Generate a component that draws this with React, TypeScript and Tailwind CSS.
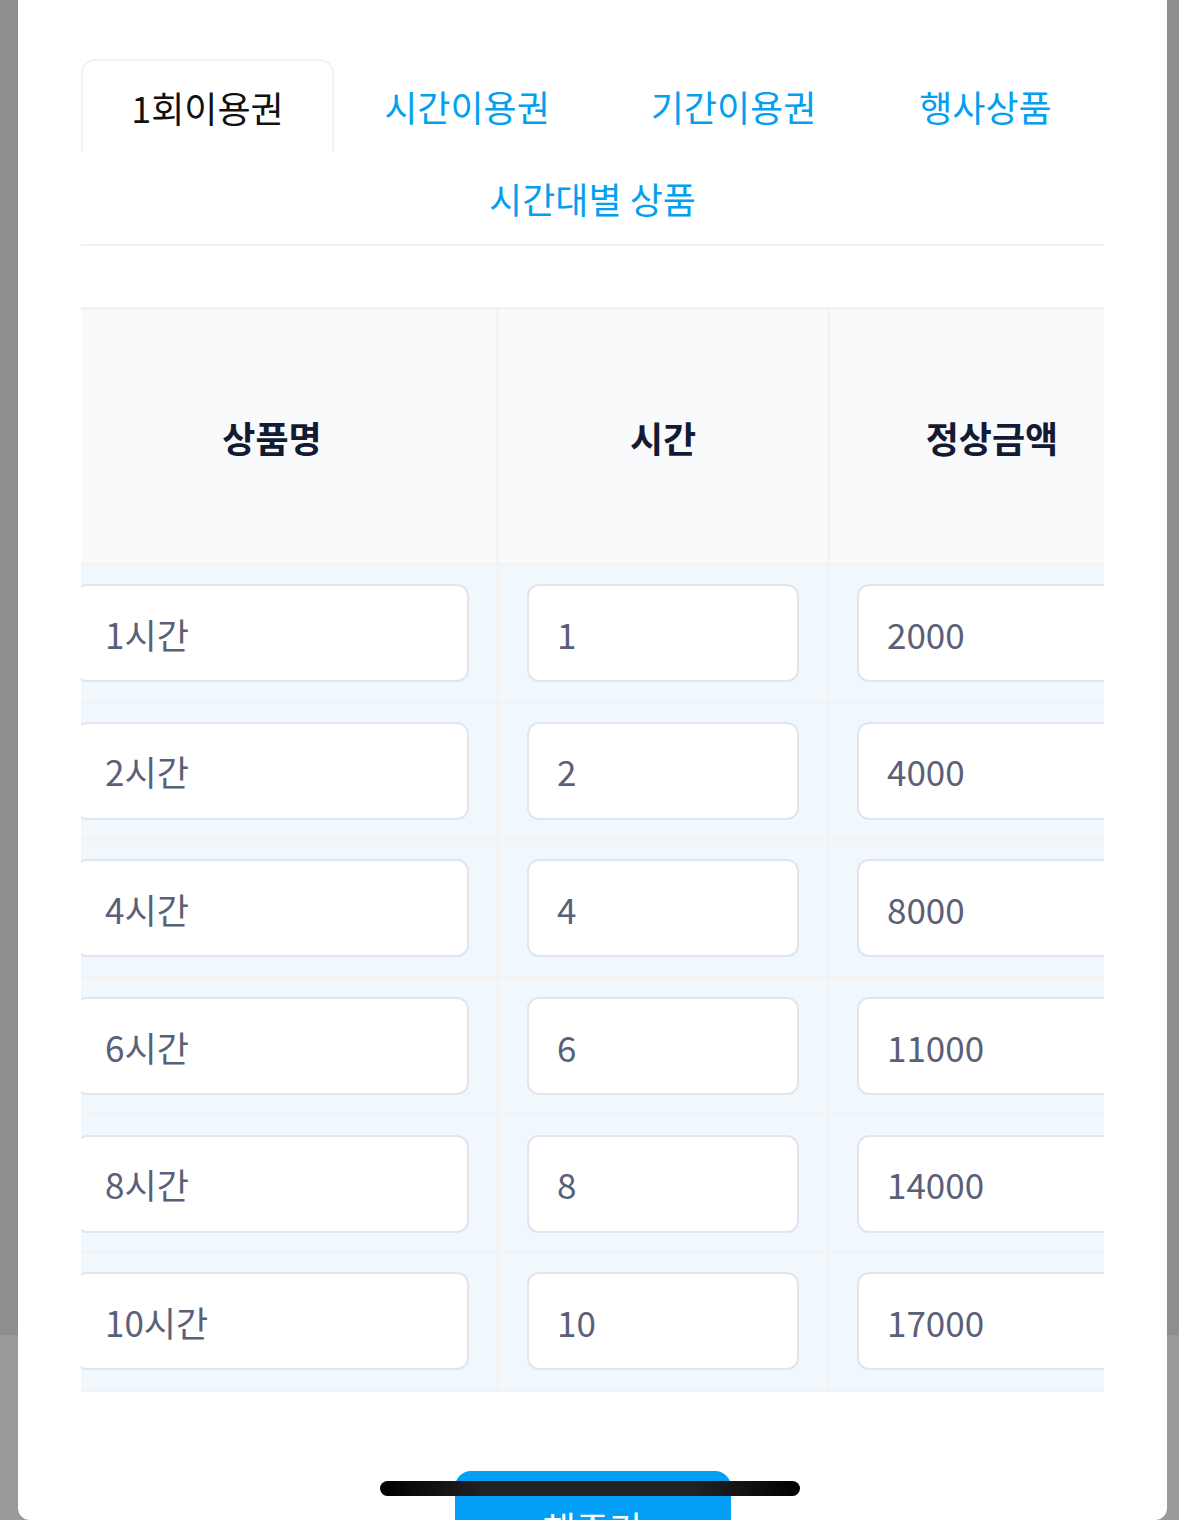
import React from 'react';

const TABS = [
  { label: '1회이용권', width: 'w-[253px]', active: true },
  { label: '시간이용권', width: 'w-[266px]', active: false },
  { label: '기간이용권', width: 'w-[267px]', active: false },
  { label: '행사상품', width: 'w-[237px]', active: false },
];

const ROWS = [
  { name: '1시간', hours: '1', price: '2000' },
  { name: '2시간', hours: '2', price: '4000' },
  { name: '4시간', hours: '4', price: '8000' },
  { name: '6시간', hours: '6', price: '11000' },
  { name: '8시간', hours: '8', price: '14000' },
  { name: '10시간', hours: '10', price: '17000' },
];

const Field = ({ value }: { value: string }) => (
  <input
    readOnly
    defaultValue={value}
    className="h-[98px] w-full rounded-[12px] border-2 border-[#e1e5ee] bg-white pl-[28px] text-[35px] text-[#5b6079] outline-none"
  />
);

export default function App() {
  return (
    <div className="relative h-[1520px] w-[1179px] overflow-hidden bg-[linear-gradient(to_bottom,#8e8e90_1335px,#999999_1335px)] font-['Noto_Sans_CJK_KR','Noto_Sans',sans-serif]">
      <div className="ml-[18px] mr-[12px] h-full rounded-b-[12px] bg-white px-[63px] pt-[59px]">
        {/* 탭 */}
        <div className="flex flex-wrap justify-center border-b-2 border-[#f2f2f2]">
          {TABS.map((tab) => (
            <div
              key={tab.label}
              className={`flex h-[93px] items-center justify-center text-[36px] ${tab.width} ${
                tab.active
                  ? 'rounded-t-[14px] border-x-2 border-t-2 border-[#f2f2f2] text-[#111111]'
                  : 'text-[#03a0f0]'
              }`}
            >
              {tab.label}
            </div>
          ))}
          <div className="flex h-[92px] items-center justify-center px-[52px] text-[36px] text-[#03a0f0]">
            시간대별 상품
          </div>
        </div>

        {/* 표 */}
        <div className="mt-[61px] w-full overflow-hidden">
          <div className="ml-[-33px] w-[1140px] border-y-[3px] border-[#f3f3f3]">
            <div className="flex h-[253px] bg-[#f9fafc] text-[36px] font-bold text-[#141a33]">
              <div className="flex w-[451px] items-center justify-center border-r-[3px] border-[#f3f3f3]">상품명</div>
              <div className="flex w-[331px] items-center justify-center border-r-[3px] border-[#f3f3f3]">시간</div>
              <div className="flex w-[324px] items-center justify-center">정상금액</div>
            </div>
            {ROWS.map((row) => (
              <div key={row.name} className="flex h-[137.6px] border-t-[3px] border-[#f3f3f3] bg-[#f0f8fe]">
                <div className="flex w-[451px] items-center border-r-[3px] border-[#f3f3f3] px-[27px]">
                  <Field value={row.name} />
                </div>
                <div className="flex w-[331px] items-center border-r-[3px] border-[#f3f3f3] px-[28px]">
                  <Field value={row.hours} />
                </div>
                <div className="flex w-[358px] items-center pl-[27px]">
                  <Field value={row.price} />
                </div>
              </div>
            ))}
          </div>
        </div>

        {/* 버튼 */}
        <div className="mx-auto mt-[79px] flex h-[90px] w-[276px] justify-center rounded-t-[16px] bg-[#039ff6] pt-[38px] text-[36px] leading-none text-white">
          해주기
        </div>
      </div>

      <div className="absolute left-[380px] top-[1481px] h-[15px] w-[420px] rounded-full bg-[linear-gradient(to_right,#000000,#222222_25%,#222222_75%,#000000)]" />
    </div>
  );
}
